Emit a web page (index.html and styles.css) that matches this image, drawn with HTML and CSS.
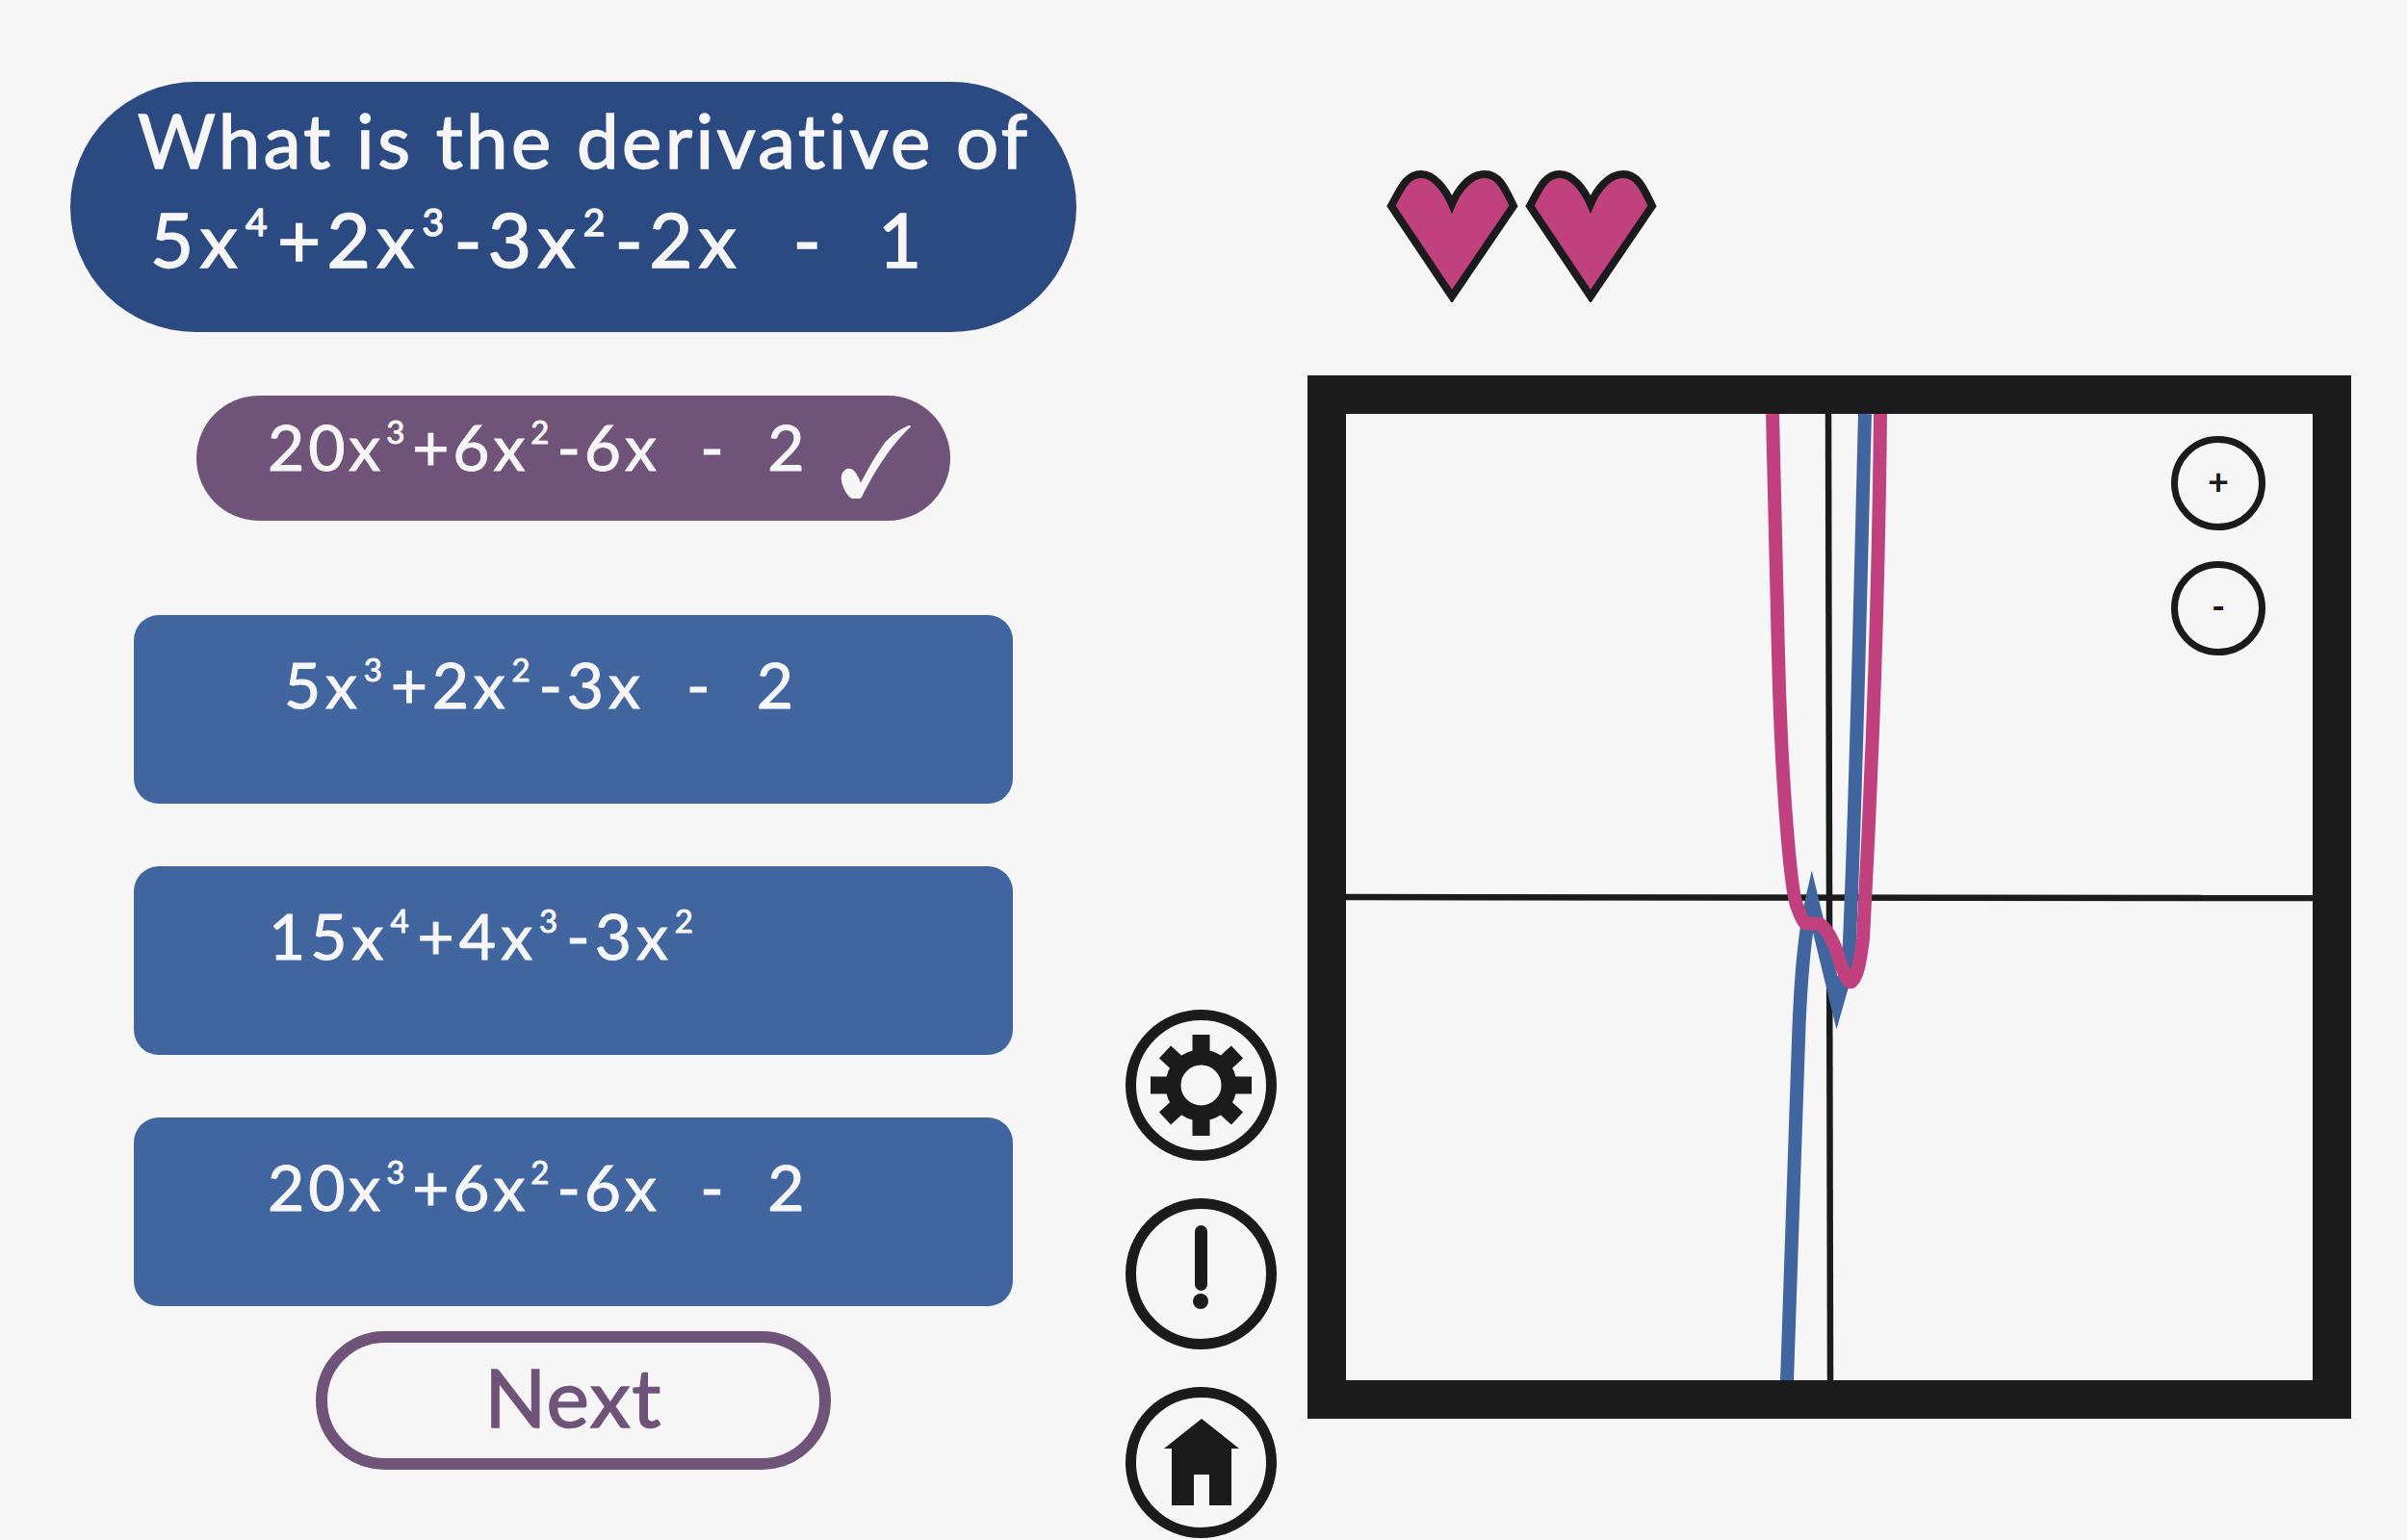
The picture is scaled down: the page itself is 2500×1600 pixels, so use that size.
FILE: index.html
```html
<!DOCTYPE html>
<html lang="en">
<head>
    <meta charset="UTF-8">
    <title>Derivative quiz</title>
    <link rel="stylesheet" href="styles.css">
</head>
<body>
    <div class="page">
        <div class="quiz">
            <div class="question">
                <p>What is the derivative of</p>
                <p class="question-eq">5x<sup>4</sup>+2x<sup>3</sup>-3x<sup>2</sup>-2x  -  1</p>
            </div>
            <div class="answer">
                <span>20x<sup>3</sup>+6x<sup>2</sup>-6x  -  2</span>
                <svg class="tick" viewBox="0 0 74 76">
                    <path d="M74 0 C60 6 50 14 44 24 C34 38 28 50 22 62 C18 52 14 44 8 46 C0 50 2 60 8 70 C12 76 18 78 22 74 C34 50 50 22 74 0 Z" />
                </svg>
            </div>
            <button class="option option-a"><span>5x<sup>3</sup>+2x<sup>2</sup>-3x  -  2</span></button>
            <button class="option option-b"><span>15x<sup>4</sup>+4x<sup>3</sup>-3x<sup>2</sup></span></button>
            <button class="option option-c"><span>20x<sup>3</sup>+6x<sup>2</sup>-6x  -  2</span></button>
            <button class="next">Next</button>
        </div>

        <div class="tools">
            <svg class="tool" viewBox="0 0 157 157">
                <ellipse class="ring" cx="78.5" cy="78.5" rx="73" ry="73" />
                <g class="spokes">
                    <line x1="78.5" y1="26" x2="78.5" y2="131" />
                    <line x1="26" y1="78.5" x2="131" y2="78.5" />
                    <line x1="41" y1="44" x2="116" y2="113" />
                    <line x1="116" y1="44" x2="41" y2="113" />
                </g>
                <circle class="hub" cx="78.5" cy="78.5" r="29" />
            </svg>
            <svg class="tool" viewBox="0 0 157 157">
                <ellipse class="ring" cx="78.5" cy="78.5" rx="73" ry="73" />
                <rect class="solid" x="72" y="28" width="13" height="68" rx="6.5" />
                <circle class="solid" cx="78" cy="107" r="8" />
            </svg>
            <svg class="tool" viewBox="0 0 157 157">
                <ellipse class="ring" cx="78.5" cy="78.5" rx="73" ry="73" />
                <path class="solid" d="M79 33 L118 64 L110 64 L110 123 L87 123 L87 91 L71 91 L71 123 L48 123 L48 64 L40 64 Z" />
            </svg>
        </div>

        <div class="board">
            <div class="hearts">
                <svg class="heart" viewBox="0 0 137 138">
                    <path d="M5 38 C14 22 20 5 36 5 C50 5 62 22 68 36 C74 22 86 5 102 5 C118 5 124 22 132 38 L68 132 Z" />
                </svg>
                <svg class="heart" viewBox="0 0 137 138">
                    <path d="M5 38 C14 22 20 5 36 5 C50 5 62 22 68 36 C74 22 86 5 102 5 C118 5 124 22 132 38 L68 132 Z" />
                </svg>
            </div>
            <div class="graph">
                <svg class="plot" viewBox="0 0 1004 1004">
                    <line class="axis" x1="501" y1="0" x2="503" y2="1004" />
                    <line class="axis" x1="0" y1="502" x2="1004" y2="503" />
                    <path class="curve-blue" d="M458 1005 C462 900 466 780 470 650 C472 590 476 540 484 505 L510 612 L522 570 C530 400 535 150 539 0" />
                    <path class="curve-pink" d="M443 0 L449 250 C452 380 462 500 469 513 C472 522 475 528 477 529 L492 530 C500 535 507 550 512 565 C518 585 523 592 525 590 C531 585 534 570 537 545 C545 400 553 200 555 0" />
                </svg>
                <button class="zoom zoom-in">+</button>
                <button class="zoom zoom-out">-</button>
            </div>
        </div>
    </div>
</body>
</html>
```

FILE: styles.css
```css
body {
    margin: 0;
    background-color: #f6f6f6;
    font-family: Lato, "Open Sans", sans-serif;
    color: #f6f6f6;
}
p {
    margin: 0;
    white-space: pre;
}
button {
    font-family: inherit;
    cursor: pointer;
}
sup {
    font-size: 0.5em;
    line-height: 0;
    vertical-align: 0.85em;
    padding: 0 4px 0 2px;
}
.page {
    display: flex;
    height: 1600px;
    overflow: hidden;
}

/* left column */
.quiz {
    width: 1045px;
    margin-left: 73px;
    padding-top: 85px;
    display: flex;
    flex-direction: column;
    align-items: center;
}
.question {
    box-sizing: border-box;
    width: 100%;
    height: 260px;
    padding: 9px 0 0 70px;
    background: #2c4a82;
    border-radius: 130px;
    font-size: 78px;
    line-height: 103px;
    -webkit-text-stroke: 1.5px #f6f6f6;
    letter-spacing: 3.4px;
}
.question-eq {
    padding-left: 13px;
    letter-spacing: 6.4px;
}
.answer {
    box-sizing: border-box;
    width: 783px;
    height: 130px;
    margin-top: 66px;
    padding: 8px 0 0 74px;
    background: #705378;
    border-radius: 65px;
    display: flex;
    align-items: flex-start;
    gap: 32px;
    font-size: 66px;
    line-height: 90px;
    letter-spacing: 3.9px;
    white-space: pre;
    -webkit-text-stroke: 1px #f6f6f6;
}
.tick {
    width: 74px;
    height: 76px;
    margin-top: 23px;
    flex: none;
    fill: #f6f6f6;
    stroke: #f6f6f6;
    stroke-width: 2;
}
.option {
    box-sizing: border-box;
    width: 913px;
    height: 196px;
    margin-top: 65px;
    border: none;
    background: #41659f;
    border-radius: 26px;
    color: #f6f6f6;
    font-size: 66px;
    line-height: 90px;
    white-space: pre;
    display: flex;
    align-items: flex-start;
    padding: 27px 0 0 0;
    -webkit-text-stroke: 1px #f6f6f6;
}
.option-a {
    margin-top: 98px;
    padding-left: 156px;
    letter-spacing: 4.8px;
}
.option-b {
    padding-left: 140px;
    letter-spacing: 5px;
}
.option-c {
    padding-left: 139px;
    letter-spacing: 3.9px;
}
.next {
    box-sizing: border-box;
    width: 535px;
    height: 144px;
    margin-top: 26px;
    border: 12px solid #705378;
    border-radius: 72px;
    background: transparent;
    color: #705378;
    font-size: 84px;
    line-height: 100px;
    letter-spacing: 1.5px;
    padding: 0 0 8px 0;
    -webkit-text-stroke: 1.5px #705378;
}

/* icon buttons */
.tools {
    width: 157px;
    margin-left: 51px;
    padding-top: 1049px;
    display: flex;
    flex-direction: column;
    gap: 39px;
}
.tool {
    width: 157px;
    height: 157px;
    flex: none;
}
.ring {
    fill: none;
    stroke: #1b1b1b;
    stroke-width: 11;
}
.spokes line {
    stroke: #1b1b1b;
    stroke-width: 18;
}
.hub {
    fill: #f6f6f6;
    stroke: #1b1b1b;
    stroke-width: 16;
}
.solid {
    fill: #1b1b1b;
}

/* hearts + graph */
.board {
    margin-left: 32px;
    padding-top: 176px;
}
.hearts {
    display: flex;
    gap: 7px;
    margin-left: 82px;
    height: 138px;
    margin-bottom: 76px;
}
.heart {
    width: 137px;
    height: 138px;
    fill: #c0417e;
    stroke: #1b1b1b;
    stroke-width: 8;
}
.graph {
    position: relative;
    width: 1004px;
    height: 1004px;
    border: 40px solid #1b1b1b;
}
.plot {
    display: block;
    width: 1004px;
    height: 1004px;
}
.axis {
    stroke: #1b1b1b;
    stroke-width: 6.5;
}
.curve-blue, .curve-pink {
    fill: none;
    stroke-width: 14;
    stroke-miterlimit: 10;
}
.curve-blue {
    stroke: #41659f;
}
.curve-pink {
    stroke: #c0417e;
}
.zoom {
    position: absolute;
    right: 49px;
    box-sizing: border-box;
    width: 98px;
    height: 98px;
    padding: 0 0 6px 0;
    border: 7px solid #1b1b1b;
    border-radius: 50%;
    background: transparent;
    color: #1b1b1b;
    font-size: 38px;
    font-weight: 700;
}
.zoom-in {
    top: 23px;
}
.zoom-out {
    top: 153px;
}
```
